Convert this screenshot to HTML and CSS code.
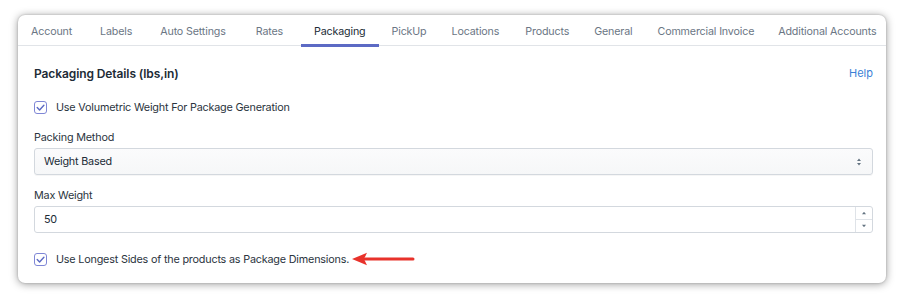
FILE: index.html
```html
<!DOCTYPE html>
<html>
<head>
<meta charset="utf-8">
<link rel="stylesheet" href="styles.css">
</head>
<body>
<div class="page">
  <div class="card">
    <nav class="tabs">
      <span class="tab">Account</span>
      <span class="tab">Labels</span>
      <span class="tab">Auto Settings</span>
      <span class="tab">Rates</span>
      <span class="tab active">Packaging</span>
      <span class="tab">PickUp</span>
      <span class="tab">Locations</span>
      <span class="tab">Products</span>
      <span class="tab">General</span>
      <span class="tab">Commercial Invoice</span>
      <span class="tab">Additional Accounts</span>
    </nav>
    <div class="content">
      <div class="heading-row">
        <h2 class="heading">Packaging Details (lbs,in)</h2>
        <a class="help">Help</a>
      </div>
      <label class="check-row">
        <span class="checkbox"><svg viewBox="0 0 13 13" width="13" height="13"><path d="M3.2 6.6 L5.6 9 L9.9 4.3" fill="none" stroke="#5c6ac4" stroke-width="1.4" stroke-linecap="round" stroke-linejoin="round"/></svg></span>
        <span class="check-label">Use Volumetric Weight For Package Generation</span>
      </label>
      <div class="field">
        <div class="field-label">Packing Method</div>
        <div class="select">
          <span>Weight Based</span>
          <svg class="select-arrows" viewBox="0 0 8 10" width="8" height="10"><path d="M4 1.5 L6 4 H2 Z M4 8.5 L6 6 H2 Z" fill="#637381"/></svg>
        </div>
      </div>
      <div class="field">
        <div class="field-label">Max Weight</div>
        <div class="input">
          <span class="input-value">50</span>
          <span class="spinner">
            <span class="spin"><svg viewBox="0 0 6 4" width="6" height="4"><path d="M3 0.8 L5 3.2 H1 Z" fill="#637381"/></svg></span>
            <span class="spin"><svg viewBox="0 0 6 4" width="6" height="4"><path d="M3 3.2 L5 0.8 H1 Z" fill="#637381"/></svg></span>
          </span>
        </div>
      </div>
      <label class="check-row last">
        <span class="checkbox"><svg viewBox="0 0 13 13" width="13" height="13"><path d="M3.2 6.6 L5.6 9 L9.9 4.3" fill="none" stroke="#5c6ac4" stroke-width="1.4" stroke-linecap="round" stroke-linejoin="round"/></svg></span>
        <span class="check-label">Use Longest Sides of the products as Package Dimensions.</span>
        <svg class="arrow" viewBox="0 0 64 14" width="64" height="14"><path d="M14 7 H62" stroke="#e8322b" stroke-width="3" stroke-linecap="round"/><path d="M1 7 L16 0.8 L13 7 L16 13.2 Z" fill="#e8322b"/></svg>
      </label>
    </div>
  </div>
</div>
</body>
</html>
```

FILE: styles.css
```css
* { box-sizing: border-box; }
html, body { margin: 0; padding: 0; background: #ffffff; }
body {
  font-family: "Inter", "Liberation Sans", sans-serif;
  color: #212b36;
  font-size: 10.8px;
  letter-spacing: -0.19px;
}
.page {
  padding: 15px 14px 14px 18px;
}
.card {
  background: #fff;
  border-radius: 7px;
  box-shadow: 0 1px 8px rgba(0, 0, 0, 0.4), 0 0 2px rgba(0, 0, 0, 0.22);
  height: 268px;
  overflow: hidden;
}
.tabs {
  display: flex;
  height: 31px;
  border-bottom: 1px solid #e1e4e8;
}
.tab {
  position: relative;
  display: flex;
  align-items: center;
  height: 30px;
  padding: 2px 13.5px 0 13.5px;
  color: #6b7684;
  font-size: 10.7px;
  letter-spacing: -0.15px;
  white-space: nowrap;
}
.tab:first-child { padding-left: 13px; }
.tab:nth-child(2) { margin-left: 1px; }
.tab:nth-child(3) { margin-left: 1px; }
.tab:nth-child(4) { margin-left: 3px; }
.tab:nth-child(5) { margin-left: 4px; }
.tab:nth-child(6) { margin-left: -1px; }
.tab:nth-child(7) { margin-left: -2px; }
.tab:nth-child(8) { margin-left: -1px; }
.tab:nth-child(9) { margin-left: -2px; }
.tab:nth-child(10) { margin-left: -2px; }
.tab:nth-child(11) { margin-left: -3px; }
.tab.active { color: #212b36; }
.tab.active::after {
  content: "";
  position: absolute;
  left: 0;
  right: 0;
  bottom: -2px;
  height: 3px;
  background: #5c6ac4;
}
.content {
  padding: 17px 13px 14px 16px;
}
.heading-row {
  display: flex;
  justify-content: space-between;
  align-items: center;
  height: 20px;
}
.heading {
  margin: 0;
  font-size: 12px;
  font-weight: 600;
  letter-spacing: -0.1px;
  color: #212b36;
}
.help {
  color: #3b7fd6;
  font-size: 11px;
  letter-spacing: 0;
}
.check-row {
  display: flex;
  align-items: center;
  height: 20px;
  margin-top: 14px;
}
.check-row.last { margin-top: 16px; }
.checkbox {
  width: 13px;
  height: 13px;
  border: 1px solid #7f87d6;
  border-radius: 3px;
  display: flex;
  align-items: center;
  justify-content: center;
  margin-right: 9px;
  background: #fff;
}
.checkbox svg { display: block; margin: -1px; }
.check-label { color: #2b3440; }
.arrow { margin-left: 2px; display: block; }
.field { margin-top: 13px; }
.field-label {
  height: 16px;
  line-height: 16px;
  margin-bottom: 2px;
  color: #2b3440;
}
.select {
  display: flex;
  align-items: center;
  justify-content: space-between;
  height: 27px;
  border: 1px solid #d3d8de;
  border-radius: 3px;
  background: linear-gradient(#fbfbfc, #f6f7f8);
  padding: 0 9px 0 9px;
  box-shadow: 0 1px 0 rgba(22, 29, 37, 0.04);
}
.select-arrows { display: block; }
.input {
  display: flex;
  align-items: stretch;
  height: 27px;
  border: 1px solid #d3d8de;
  border-radius: 3px;
  background: #fff;
}
.input-value {
  flex: 1;
  display: flex;
  align-items: center;
  padding-left: 9px;
}
.spinner {
  width: 17px;
  display: flex;
  flex-direction: column;
  border-left: 1px solid #dfe3e8;
}
.spin {
  flex: 1;
  display: flex;
  align-items: center;
  justify-content: center;
}
.spin + .spin { border-top: 1px solid #dfe3e8; }
.spin svg { display: block; }
```
